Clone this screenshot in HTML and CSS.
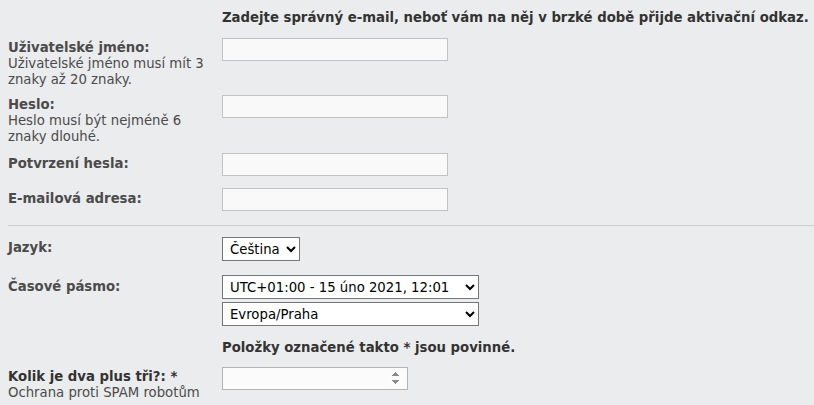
FILE: index.html
```html
<!DOCTYPE html>
<html lang="cs">
<head>
<meta charset="utf-8">
<title>Registrace</title>
<link rel="stylesheet" href="styles.css">
</head>
<body>
<form class="panel">
  <p class="note top-note">Zadejte správný e-mail, neboť vám na něj v brzké době přijde aktivační odkaz.</p>

  <dl class="row r-user">
    <dt><label>Uživatelské jméno:</label><span class="explain">Uživatelské jméno musí mít 3 znaky až 20 znaky.</span></dt>
    <dd><input type="text" class="inputbox"></dd>
  </dl>
  <dl class="row r-pass">
    <dt><label>Heslo:</label><span class="explain">Heslo musí být nejméně 6 znaky dlouhé.</span></dt>
    <dd><input type="password" class="inputbox"></dd>
  </dl>
  <dl class="row r-confirm">
    <dt><label>Potvrzení hesla:</label></dt>
    <dd><input type="password" class="inputbox"></dd>
  </dl>
  <dl class="row r-email">
    <dt><label>E-mailová adresa:</label></dt>
    <dd><input type="email" class="inputbox"></dd>
  </dl>

  <hr class="divider">

  <dl class="row r-lang">
    <dt><label>Jazyk:</label></dt>
    <dd><select class="sel sel-lang"><option>Čeština</option></select></dd>
  </dl>
  <dl class="row r-tz">
    <dt><label>Časové pásmo:</label></dt>
    <dd class="stack">
      <select class="sel sel-tz"><option>UTC+01:00 - 15 úno 2021, 12:01</option></select>
      <select class="sel sel-tz"><option>Evropa/Praha</option></select>
    </dd>
  </dl>

  <p class="note req-note">Položky označené takto * jsou povinné.</p>

  <dl class="row r-q">
    <dt><label class="dark">Kolik je dva plus tři?: *</label><span class="explain">Ochrana proti SPAM robotům</span></dt>
    <dd><input type="number" class="inputbox numbox"></dd>
  </dl>
</form>
</body>
</html>
```
FILE: styles.css
```css
html, body {
  margin: 0;
  padding: 0;
  background: #ebeced;
}
body {
  font-family: "DejaVu Sans", Verdana, sans-serif;
  font-size: 13.25px;
  line-height: 16px;
  color: #333333;
  overflow: hidden;
}
.panel {
  display: flex;
  flex-direction: column;
  padding: 10px 0 0 8px;
}
.note {
  margin: 0;
  padding-left: 214px;
  font-weight: bold;
  color: #333333;
}
.top-note { margin-bottom: 12px; }
.req-note { margin-top: 14px; margin-bottom: 11px; }

.row {
  display: flex;
  margin: 0;
}
.row dt {
  width: 214px;
  flex: none;
  padding-top: 2px;
  padding-right: 6px;
  box-sizing: border-box;
  display: flex;
  flex-direction: column;
}
.row dd {
  margin: 0;
  flex: 1;
}
.row label {
  font-weight: bold;
  color: #4b4b4b;
}
.row label.dark { color: #333333; }
.explain { color: #4b4b4b; }

.r-user { margin-bottom: 7px; }
.r-pass { margin-bottom: 8px; }
.r-confirm { margin-bottom: 12px; }
.r-confirm dt, .r-email dt, .r-lang dt { padding-top: 3px; }
.r-tz dt { padding-top: 4px; }

.divider {
  border: 0;
  border-top: 1px solid #cdcdcd;
  margin: 14px 0 11px 0;
  height: 0;
}
.r-lang { margin-bottom: 14px; }

.inputbox {
  box-sizing: border-box;
  width: 226px;
  height: 23px;
  margin: 0;
  border: 1px solid #c2c2c2;
  background: #f9f9f9;
  font: inherit;
  padding: 2px 4px;
}
.numbox {
  width: 186px;
  height: 23px;
  border-color: #b4b4b4;
  background: #fbfbfb;
}
.numbox::-webkit-inner-spin-button,
.numbox::-webkit-outer-spin-button {
  opacity: 1;
}
.stack {
  display: flex;
  flex-direction: column;
  align-items: flex-start;
  gap: 3px;
}
.sel {
  box-sizing: border-box;
  height: 24px;
  margin: 0;
  font: inherit;
  color: #000000;
  background: #ffffff;
  border: 1px solid #767676;
  border-radius: 0;
  padding: 0 3px;
}
.sel-lang { width: 78px; }
.sel-tz { width: 257px; }
```
